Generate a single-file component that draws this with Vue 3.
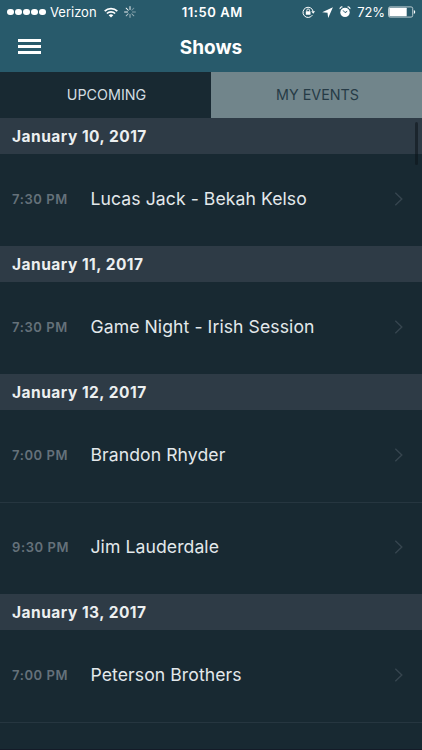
<template>
  <div class="screen">
    <header class="header">
      <div class="status-bar">
        <div class="status-left">
          <span class="signal">
            <i v-for="n in 5" :key="n" class="signal-dot"></i>
          </span>
          <span class="carrier">Verizon</span>
          <svg class="wifi" width="14" height="11" viewBox="0 0 14 11">
            <g fill="none" stroke="#fff" stroke-width="1.7">
              <path d="M0.7 4.2a8.9 8.9 0 0 1 12.6 0" />
              <path d="M2.9 6.5a5.8 5.8 0 0 1 8.2 0" />
            </g>
            <path d="M7 10.6 4.7 8.3a3.3 3.3 0 0 1 4.6 0z" fill="#fff" />
          </svg>
          <svg class="spinner" width="12" height="12" viewBox="0 0 12 12">
            <line
              v-for="n in 8"
              :key="n"
              x1="6"
              y1="0.6"
              x2="6"
              y2="3.5"
              stroke="#fff"
              stroke-width="1"
              stroke-linecap="round"
              :opacity="spokeOpacity(n)"
              :transform="`rotate(${n * 45} 6 6)`"
            />
          </svg>
        </div>
        <span class="clock">11:50 AM</span>
        <div class="status-right">
          <svg class="rotation-lock" width="14" height="12" viewBox="0 0 14 12">
            <path
              d="M10.4 9.1A5.1 5.1 0 1 1 11.1 5.4"
              fill="none"
              stroke="#fff"
              stroke-width="1"
            />
            <path d="M9.2 5.2h3.9l-1.9 2.5z" fill="#fff" />
            <rect x="3.8" y="5.3" width="4.7" height="3.5" rx="0.4" fill="#fff" />
            <path
              d="M4.8 5.4V4.3a1.35 1.35 0 0 1 2.7 0v1.1"
              fill="none"
              stroke="#fff"
              stroke-width="0.9"
            />
          </svg>
          <svg class="location" width="11" height="11" viewBox="0 0 11 11">
            <path d="M10.9 0.2 6.2 10.9 5.5 5.7 0.2 5.2z" fill="#fff" />
          </svg>
          <svg class="alarm" width="12" height="12" viewBox="0 0 12 12">
            <circle cx="6" cy="6.4" r="4.7" fill="#fff" />
            <path
              d="M1.2 3A1.6 1.6 0 0 1 3.4 1.1M8.6 1.1A1.6 1.6 0 0 1 10.8 3"
              fill="none"
              stroke="#fff"
              stroke-width="1.2"
            />
            <path
              d="M4.1 4.4 6 6.6 8.2 5.3"
              fill="none"
              stroke="#285a6b"
              stroke-width="1"
            />
          </svg>
          <span class="percent">72%</span>
          <svg class="battery" width="28" height="12" viewBox="0 0 28 12">
            <rect
              x="0.5"
              y="0.9"
              width="24.2"
              height="10.2"
              rx="1.6"
              fill="none"
              stroke="#dce6e9"
              stroke-width="0.8"
            />
            <rect x="1.3" y="1.7" width="17.4" height="8.6" rx="0.5" fill="#fff" />
            <path d="M25.8 4a2.1 2.1 0 0 1 0 4z" fill="#fff" />
          </svg>
        </div>
      </div>

      <div class="nav-bar">
        <button class="menu-button" aria-label="Menu">
          <span class="menu-line"></span>
          <span class="menu-line"></span>
          <span class="menu-line"></span>
        </button>
        <h1 class="nav-title">Shows</h1>
      </div>
    </header>

    <nav class="tabs">
      <button
        v-for="tab in tabs"
        :key="tab.id"
        class="tab"
        :class="{ active: activeTab === tab.id }"
        @click="activeTab = tab.id"
      >
        {{ tab.label }}
      </button>
    </nav>

    <main class="show-list">
      <section v-for="day in days" :key="day.date">
        <h2 class="date-header">{{ day.date }}</h2>
        <div v-for="show in day.shows" :key="show.title" class="show-row">
          <span class="show-time">{{ show.time }}</span>
          <span class="show-title">{{ show.title }}</span>
          <svg class="chevron" width="10" height="14" viewBox="0 0 10 14">
            <path
              d="M1.3 0.8 7.8 7 1.3 13.2"
              fill="none"
              stroke="#36454f"
              stroke-width="1.4"
            />
          </svg>
        </div>
      </section>
      <div class="scroll-thumb"></div>
    </main>
  </div>
</template>

<script setup>
import { ref } from "vue";

const tabs = [
  { id: "upcoming", label: "UPCOMING" },
  { id: "my-events", label: "MY EVENTS" },
];
const activeTab = ref("upcoming");

const days = ref([
  {
    date: "January 10, 2017",
    shows: [{ time: "7:30 PM", title: "Lucas Jack - Bekah Kelso" }],
  },
  {
    date: "January 11, 2017",
    shows: [{ time: "7:30 PM", title: "Game Night - Irish Session" }],
  },
  {
    date: "January 12, 2017",
    shows: [
      { time: "7:00 PM", title: "Brandon Rhyder" },
      { time: "9:30 PM", title: "Jim Lauderdale" },
    ],
  },
  {
    date: "January 13, 2017",
    shows: [{ time: "7:00 PM", title: "Peterson Brothers" }],
  },
]);

// Spokes fade around the activity spinner
function spokeOpacity(n) {
  return n >= 6 ? 0.95 : 0.3 + n * 0.07;
}
</script>

<style>
body {
  margin: 0;
  background: #182932;
}
</style>

<style scoped>
.screen {
  height: 750px;
  display: flex;
  flex-direction: column;
  overflow: hidden;
  box-sizing: border-box;
  border-bottom: 1px solid #141b28;
  background: #182932;
  color: #e3e8eb;
  font-family: Inter, "Liberation Sans", sans-serif;
}

button {
  padding: 0;
  border: none;
  border-radius: 0;
  background: none;
  font-family: inherit;
  cursor: pointer;
}

.header {
  flex: none;
  height: 72px;
  background: #285a6b;
  color: #fff;
}

.status-bar {
  display: flex;
  align-items: center;
  height: 24px;
  padding: 0 6px 0 7px;
}

.status-left,
.status-right {
  display: flex;
  align-items: center;
  flex: 1;
}

.status-right {
  justify-content: flex-end;
}

.signal {
  display: flex;
  gap: 1.5px;
}

.signal-dot {
  width: 6.5px;
  height: 6.5px;
  border-radius: 50%;
  background: #fff;
}

.carrier {
  margin-left: 4.5px;
  width: 47px;
  font-size: 13px;
  line-height: 24px;
}

.wifi {
  margin-left: 6.5px;
}

.spinner {
  margin-left: 6px;
}

.clock {
  margin-left: 1.5px;
  font-size: 13px;
  font-weight: 600;
  line-height: 24px;
  letter-spacing: 0.55px;
}

.location {
  margin-left: 6px;
}

.alarm {
  margin-left: 6px;
}

.percent {
  margin-left: 6.5px;
  font-size: 13px;
  line-height: 24px;
  letter-spacing: -0.1px;
}

.battery {
  margin-left: 3px;
}

.nav-bar {
  display: grid;
  grid-template-columns: 60px 1fr 60px;
  align-items: center;
  height: 48px;
}

.menu-button {
  display: flex;
  flex-direction: column;
  gap: 3px;
  width: 23px;
  margin: 0 0 3px 18px;
}

.menu-line {
  height: 3px;
  background: #fff;
}

.nav-title {
  margin: 0;
  font-size: 19px;
  font-weight: 700;
  line-height: 24px;
  text-align: center;
}

.tabs {
  flex: none;
  display: grid;
  grid-template-columns: 1fr 1fr;
  height: 46px;
  background: #182932;
}

.tab {
  padding-left: 2px;
  background: #71858b;
  color: #263b46;
  font-size: 14.3px;
  line-height: 46px;
}

.tab.active {
  background: #182932;
  color: #d3dde1;
}

.show-list {
  position: relative;
  flex: 1;
  overflow: hidden;
}

.date-header {
  margin: 0;
  height: 36px;
  padding-left: 12px;
  background: #2e3b46;
  color: #eceff0;
  font-size: 15.5px;
  font-weight: 650;
  line-height: 37px;
  letter-spacing: 0.5px;
}

.show-row {
  display: flex;
  align-items: center;
  box-sizing: border-box;
  height: 92px;
  padding: 0 18px 2px 12px;
}

/* hairlines between rows, and under the last one */
.show-row + .show-row {
  box-shadow: inset 0 1px 0 #263640;
}

section:last-of-type .show-row:last-child {
  box-shadow: 0 1px 0 #263640;
}

.show-time {
  width: 78.5px;
  color: #65717a;
  font-size: 13px;
  font-weight: 600;
  letter-spacing: 0.6px;
}

.show-title {
  flex: 1;
  padding-bottom: 1px;
  font-size: 17.6px;
  white-space: nowrap;
  letter-spacing: 0.08px;
}

.scroll-thumb {
  position: absolute;
  top: 4px;
  right: 4px;
  width: 3px;
  height: 43px;
  border-radius: 2px;
  background: rgba(12, 20, 26, 0.55);
}
</style>
